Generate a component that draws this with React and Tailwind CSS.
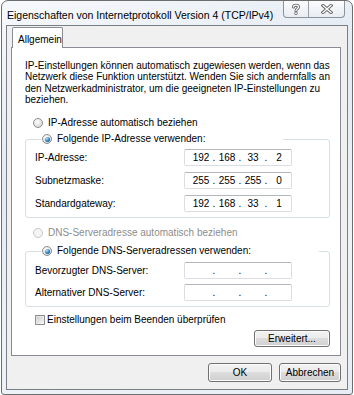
import React from 'react';

const ui = "font-['Liberation_Sans',Arial,sans-serif] text-[10px] leading-[12px] text-black";

const Radio = ({ checked, disabled }) => (
    <span
        className={`w-[10px] h-[10px] shrink-0 rounded-full border flex items-center justify-center ${
            disabled
                ? 'border-[#c9c9c9] bg-[#f4f4f4]'
                : 'border-[#8e8f8f] bg-[radial-gradient(circle_at_40%_35%,#ffffff,#dcdcdc_70%,#cfcfcf)]'
        }`}
    >
        {checked && (
            <span className="w-[5px] h-[5px] rounded-full bg-[radial-gradient(circle_at_35%_30%,#b8e4fc,#2a7fc4_55%,#0d3f6e)]" />
        )}
    </span>
);

const Checkbox = () => (
    <span className="w-[10px] h-[10px] shrink-0 border border-[#8e8f8f] bg-[linear-gradient(135deg,#dcdcdc,#f6f6f6)] p-[1px]">
        <span className="block w-full h-full bg-[linear-gradient(135deg,#cfcfcf,#f4f4f4)]" />
    </span>
);

const IpBox = ({ parts = ['', '', '', ''] }) => (
    <div className="h-[17px] w-[108px] bg-white border border-[#dadde2] border-t-[#b3b7bd] rounded-[2px] flex items-center pl-[5px]">
        {parts.map((p, i) => (
            <React.Fragment key={i}>
                <span className="w-[22px] text-center">{p}</span>
                {i < 3 && <span className="w-[4px] text-center">.</span>}
            </React.Fragment>
        ))}
    </div>
);

const Button = ({ children, className }) => (
    <button
        className={`rounded-[3px] border border-[#707070] shadow-[inset_0_0_0_1px_#fcfcfc] bg-[linear-gradient(#f2f2f2_0%,#ebebeb_50%,#dddddd_50%,#cfcfcf_100%)] flex items-center justify-center ${className}`}
    >
        {children}
    </button>
);

const Row = ({ label, parts }) => (
    <div className="grid grid-cols-[149px_108px] items-center">
        <span className="whitespace-nowrap">{label}</span>
        <IpBox parts={parts} />
    </div>
);

export default function App() {
    return (
        <div className={`w-[354px] h-[395px] bg-white ${ui}`}>
            <div className="ml-[1px] w-[352px] h-[395px] border border-[#6d6d6d] rounded-t-[7px] rounded-b-[3px] bg-[linear-gradient(160deg,#f6f9fc_0%,#e3eaf2_35%,#eef3f8_70%,#e6edf4_100%)] px-[4px] pb-[4px] flex flex-col">
                {/* title bar */}
                <div className="h-[24px] flex items-start justify-between">
                    <span className="pt-[8px] pl-[1px] text-[10.5px] leading-[13px] whitespace-nowrap">
                        Eigenschaften von Internetprotokoll Version 4 (TCP/IPv4)
                    </span>
                    <div className="flex h-[17px] mr-[3px] border border-t-0 border-[#8d9399] rounded-b-[4px] bg-[linear-gradient(#fbfcfd,#e8edf2)] overflow-hidden">
                        <div className="w-[25px] flex items-center justify-center border-r border-[#9aa0a6]">
                            <svg width="10" height="12" viewBox="0 0 10 12">
                                <path d="M2.5 4 C2.5 1.5 7.5 1.5 7.5 4 C7.5 5.8 5 5.8 5 7.8" fill="none" stroke="#6b6b6b" strokeWidth="3" strokeLinecap="round" />
                                <path d="M2.5 4 C2.5 1.5 7.5 1.5 7.5 4 C7.5 5.8 5 5.8 5 7.8" fill="none" stroke="#fdfdfd" strokeWidth="1.2" strokeLinecap="round" />
                                <circle cx="5" cy="10.3" r="1.4" fill="#fdfdfd" stroke="#6b6b6b" strokeWidth="0.9" />
                            </svg>
                        </div>
                        <div className="w-[35px] flex items-center justify-center">
                            <svg width="12" height="10" viewBox="0 0 12 10">
                                <path d="M2 1.5 L10 8.5 M10 1.5 L2 8.5" stroke="#6b6b6b" strokeWidth="3.2" strokeLinecap="square" />
                                <path d="M2 1.5 L10 8.5 M10 1.5 L2 8.5" stroke="#fdfdfd" strokeWidth="1.3" strokeLinecap="square" />
                            </svg>
                        </div>
                    </div>
                </div>

                {/* client area */}
                <div className="flex-1 border border-[#7a7f86] bg-[#f0f0f0] flex flex-col">
                    <div className="pt-[1px] pl-[4px]">
                        <div className="ml-[1px] w-[51px] h-[21px] -mb-[1px] relative bg-white border border-b-0 border-[#898c95] rounded-t-[2px] pl-[5px] pt-[6px] whitespace-nowrap">
                            Allgemein
                        </div>
                    </div>
                    <div className="ml-[4px] w-[330px] h-[309px] bg-white border border-[#898c95] flex flex-col">
                        <p className="ml-[13px] mt-[12px] leading-[11.3px] whitespace-nowrap">
                            IP-Einstellungen können automatisch zugewiesen werden, wenn das
                            <br />
                            Netzwerk diese Funktion unterstützt. Wenden Sie sich andernfalls an
                            <br />
                            den Netzwerkadministrator, um die geeigneten IP-Einstellungen zu
                            <br />
                            beziehen.
                        </p>

                        <label className="mt-[11px] ml-[21px] h-[14px] flex items-center gap-[5px]">
                            <Radio />
                            <span>IP-Adresse automatisch beziehen</span>
                        </label>

                        <fieldset className="mt-[2px] ml-[13px] w-[305px] border border-[#d5dfe5] rounded-[3px] pl-[9px] pb-[5px]">
                            <legend className="ml-[6px] w-[242px] h-[14px] pl-[1px] flex items-center gap-[5px]">
                                <Radio checked />
                                <span>Folgende IP-Adresse verwenden:</span>
                            </legend>
                            <div className="pt-[3px] flex flex-col gap-[6px]">
                                <Row label="IP-Adresse:" parts={['192', '168', '33', '2']} />
                                <Row label="Subnetzmaske:" parts={['255', '255', '255', '0']} />
                                <Row label="Standardgateway:" parts={['192', '168', '33', '1']} />
                            </div>
                        </fieldset>

                        <label className="mt-[8px] ml-[21px] h-[14px] flex items-center gap-[5px] text-[#8d8d8d]">
                            <Radio disabled />
                            <span>DNS-Serveradresse automatisch beziehen</span>
                        </label>

                        <fieldset className="mt-[4px] ml-[13px] w-[305px] border border-[#d5dfe5] rounded-[3px] pl-[9px] pb-[5px]">
                            <legend className="ml-[6px] w-[278px] h-[14px] pl-[1px] flex items-center gap-[5px]">
                                <Radio checked />
                                <span>Folgende DNS-Serveradressen verwenden:</span>
                            </legend>
                            <div className="pt-[4px] flex flex-col gap-[5px]">
                                <Row label="Bevorzugter DNS-Server:" />
                                <Row label="Alternativer DNS-Server:" />
                            </div>
                        </fieldset>

                        <label className="mt-[6px] ml-[23px] h-[14px] flex items-center gap-[2px]">
                            <Checkbox />
                            <span>Einstellungen beim Beenden überprüfen</span>
                        </label>

                        <div className="mt-[3px] mr-[10px] flex justify-end">
                            <Button className="w-[76px] h-[17px]">Erweitert...</Button>
                        </div>
                    </div>

                    <div className="mt-[7px] mr-[6px] flex justify-end gap-[7px]">
                        <Button className="w-[64px] h-[19px]">OK</Button>
                        <Button className="w-[62px] h-[19px]">Abbrechen</Button>
                    </div>
                </div>
            </div>
        </div>
    );
}
